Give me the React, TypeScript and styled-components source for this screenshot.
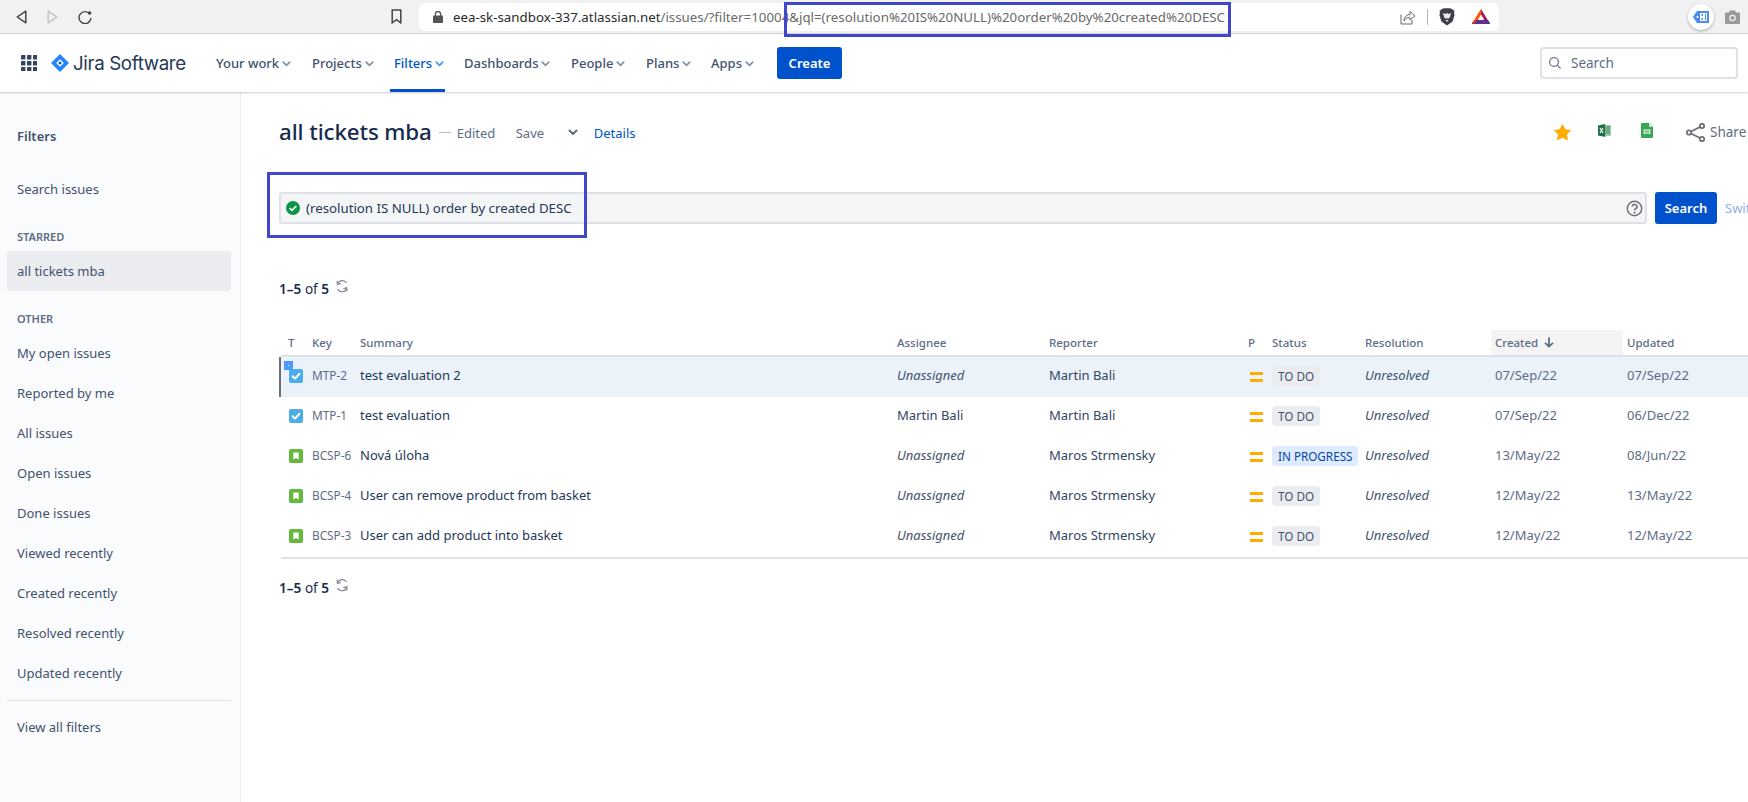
import React from "react";
import styled, { createGlobalStyle } from "styled-components";

const Global = createGlobalStyle`
  html, body { margin: 0; padding: 0; background: #fff; overflow: hidden; }
  body { font-family: "Noto Sans", "Liberation Sans", sans-serif; color: #172b4d; }
  * { box-sizing: border-box; }
`;

const Page = styled.div`
  position: relative;
  width: 1748px;
  height: 802px;
  overflow: hidden;
  display: flex;
  flex-direction: column;
`;

const Annotation = styled.div<{ $l: number; $t: number; $w: number; $h: number }>`
  position: absolute;
  left: ${p => p.$l}px;
  top: ${p => p.$t}px;
  width: ${p => p.$w}px;
  height: ${p => p.$h}px;
  border: 3px solid #3f48cc;
  pointer-events: none;
  z-index: 5;
`;

/* Browser chrome */
const Chrome = styled.div`
  height: 34px;
  flex: none;
  background: #f1f1f1;
  border-bottom: 1px solid #d6d6d6;
  display: flex;
  align-items: center;
  padding-left: 16px;
`;
const ChromeBtn = styled.svg`
  display: block;
  flex: none;
`;
const ChromeNavs = styled.div`
  display: flex;
  align-items: center;
  gap: 20px;
  width: 375px;
  flex: none;
`;
const UrlPill = styled.div`
  margin-left: 17px;
  width: 1080px;
  height: 28px;
  flex: none;
  background: #fff;
  border-radius: 6px;
  display: flex;
  align-items: center;
  padding: 0 9px 0 14px;
`;
const UrlText = styled.div`
  font-size: 13.3px;
  white-space: nowrap;
  color: #6a6a6a;
  flex: 1;
  margin-left: 10px;
`;
const UrlHost = styled.span`
  color: #2b2b2b;
`;
const PillIcons = styled.div`
  display: flex;
  align-items: center;
  gap: 11px;
`;
const PillSep = styled.div`
  width: 1px;
  height: 16px;
  background: #b5b5b5;
`;
const BatIcon = styled.svg`
  margin-left: 6px;
  flex: none;
`;
const ExtIcons = styled.div`
  margin-left: auto;
  display: flex;
  align-items: center;
  gap: 11px;
  padding-right: 8px;
`;
const ExtCircle = styled.div`
  width: 26px;
  height: 26px;
  border-radius: 50%;
  background: #fff;
  box-shadow: 0 1px 3px rgba(0, 0, 0, 0.3);
  display: flex;
  align-items: center;
  justify-content: center;
`;

/* Jira nav */
const TopNav = styled.header`
  height: 58px;
  flex: none;
  background: #fff;
  display: flex;
  align-items: center;
  padding-left: 21px;
  box-shadow: 0 1px 2px rgba(9, 30, 66, 0.22);
  position: relative;
  z-index: 2;
`;
const Logo = styled.div`
  display: flex;
  align-items: center;
  margin-left: 14px;
  gap: 4px;
  width: 161px;
`;
const LogoText = styled.span`
  font-family: "Inter", sans-serif;
  font-size: 18.7px;
  font-weight: 400;
  color: #253858;
  letter-spacing: -0.35px;
  white-space: nowrap;
`;
const NavItem = styled.div<{ $active?: boolean; $w: number }>`
  width: ${p => p.$w}px;
  height: 57px;
  display: flex;
  align-items: center;
  gap: 2px;
  padding-left: 4px;
  font-size: 13px;
  font-weight: 500;
  white-space: nowrap;
  color: ${p => (p.$active ? "#0052cc" : "#42526e")};
  position: relative;
  &::after {
    content: "";
    display: ${p => (p.$active ? "block" : "none")};
    position: absolute;
    left: 0;
    bottom: 0;
    width: 55px;
    height: 3px;
    background: #0052cc;
  }
`;
const NavList = styled.nav`
  display: flex;
  align-items: center;
`;
const CreateBtn = styled.button`
  width: 65px;
  height: 32px;
  border: 0;
  border-radius: 3px;
  background: #0052cc;
  color: #fff;
  font: 600 13px "Noto Sans", sans-serif;
`;
const TopSearch = styled.div`
  margin-left: auto;
  margin-right: 10px;
  width: 198px;
  height: 32px;
  border: 2px solid #dfe1e6;
  border-radius: 4px;
  display: flex;
  align-items: center;
  padding-left: 6px;
  gap: 9px;
  font-size: 13.5px;
  color: #5e6c84;
`;

/* Body */
const Body = styled.div`
  flex: 1;
  display: flex;
  min-height: 0;
`;
const Sidebar = styled.aside`
  width: 241px;
  flex: none;
  background: #fafbfc;
  border-right: 1px solid #ebecf0;
  padding: 24px 9px 0 7px;
`;
const SideTitle = styled.div`
  height: 40px;
  padding-left: 10px;
  display: flex;
  align-items: center;
  font-size: 13px;
  font-weight: 600;
  color: #42526e;
  margin-bottom: 13px;
`;
const SideItem = styled.div<{ $selected?: boolean }>`
  height: 40px;
  padding-left: 10px;
  display: flex;
  align-items: center;
  font-size: 13px;
  color: #42526e;
  border-radius: 3px;
  background: ${p => (p.$selected ? "#ebecf0" : "transparent")};
`;
const SideLabel = styled.div`
  height: 20px;
  margin: 17px 0 5px;
  padding-left: 10px;
  display: flex;
  align-items: center;
  font-size: 11px;
  font-weight: 600;
  color: #5e6c84;
`;
const SideRule = styled.hr`
  border: 0;
  height: 1px;
  background: #dfe1e6;
  margin: 7px 0 6px;
`;

const Main = styled.main`
  flex: 1;
  min-width: 0;
  padding: 20px 0 0 38px;
  overflow: hidden;
`;
const TitleRow = styled.div`
  height: 40px;
  display: flex;
  align-items: center;
`;
const Title = styled.h1`
  margin: 0 0 2px;
  font-size: 22.3px;
  font-weight: 500;
  color: #172b4d;
  white-space: nowrap;
  letter-spacing: -0.1px;
`;
const Dash = styled.span`
  width: 12px;
  height: 1px;
  background: #b3bac5;
  margin: 0 6px 0 7px;
`;
const Meta = styled.span<{ $link?: boolean; $w?: number }>`
  font-size: 13px;
  margin-top: 1px;
  color: ${p => (p.$link ? "#0052cc" : "#5e6c84")};
  ${p => (p.$w ? `width: ${p.$w}px;` : "")}
`;
const SaveChevron = styled.span`
  width: 27px;
  display: flex;
`;
const Actions = styled.div`
  margin-left: auto;
  display: flex;
  align-items: center;
  color: #5e6c84;
  font-size: 13.5px;
`;
const ActionIcon = styled.span<{ $w: number; $lift?: number }>`
  width: ${p => p.$w}px;
  display: flex;
  margin-top: ${p => p.$lift ?? 0}px;
`;
const ShareLabel = styled.span`
  width: 38px;
`;
const SearchRow = styled.div`
  margin-top: 40px;
  display: flex;
  align-items: center;
  height: 32px;
`;
const JqlBar = styled.div`
  width: 1368px;
  height: 32px;
  flex: none;
  background: #f4f5f7;
  border: 2px solid #dfe1e6;
  border-radius: 3px;
  display: flex;
  align-items: center;
  padding: 0 2px 0 5px;
  gap: 6px;
  font-size: 13.25px;
  color: #253858;
`;
const JqlText = styled.span`
  flex: 1;
  white-space: nowrap;
`;
const SearchBtn = styled.button`
  margin-left: 8px;
  width: 62px;
  height: 32px;
  flex: none;
  border: 0;
  border-radius: 3px;
  background: #0052cc;
  color: #fff;
  font: 600 13px "Noto Sans", sans-serif;
`;
const SwitchLink = styled.span`
  margin-left: 8px;
  font-size: 13px;
  color: #8fb0e8;
  white-space: nowrap;
`;
const Pager = styled.div<{ $top: number }>`
  margin-top: ${p => p.$top}px;
  height: 20px;
  display: flex;
  align-items: center;
  font-size: 13.6px;
  color: #172b4d;
  gap: 6px;
`;
const PagerLabel = styled.span`
  white-space: nowrap;
  b {
    font-weight: 600;
  }
`;
const PagerIcon = styled.span`
  display: flex;
  margin-top: -4px;
`;
const Table = styled.div`
  margin: 32px 0 0 2px;
  border-bottom: 2px solid #dfe1e6;
`;
const columns = "24px 48px 537px 152px 199px 24px 93px 130px 132px 1fr";
const HeadRow = styled.div`
  display: grid;
  grid-template-columns: ${columns};
  padding-left: 3px;
  height: 27px;
  border-bottom: 2px solid #dfe1e6;
`;
const HeadCell = styled.div<{ $sorted?: boolean }>`
  padding-left: 4px;
  height: 25px;
  display: flex;
  align-items: center;
  gap: 6px;
  font-size: 11.5px;
  font-weight: 500;
  color: #5e6c84;
  white-space: nowrap;
  background: ${p => (p.$sorted ? "#f4f4f4" : "transparent")};
`;
const Row = styled.div<{ $focused?: boolean }>`
  display: grid;
  grid-template-columns: ${columns};
  padding-left: 3px;
  height: 40px;
  align-items: center;
  position: relative;
  background: ${p => (p.$focused ? "#ebf2f9" : "#fff")};
  box-shadow: ${p => (p.$focused ? "-2px 0 0 #6b6e76" : "none")};
`;
const Cell = styled.div<{ $tone?: "key" | "date" | "person"; $italic?: boolean }>`
  padding-left: 4px;
  margin-top: -4px;
  font-size: 13px;
  white-space: nowrap;
  font-style: ${p => (p.$italic ? "italic" : "normal")};
  color: ${p =>
    p.$tone === "key" || p.$tone === "date" ? "#5e6c84" : p.$italic ? "#42526e" : p.$tone === "person" ? "#344563" : "#253858"};
`;
const KeyCell = styled(Cell)`
  font-size: 11.8px;
`;
const StatusCell = styled.div`
  padding-left: 4px;
  margin-top: -2px;
  display: flex;
`;
const IconCell = styled.div`
  padding-left: 5px;
  display: flex;
  margin-top: -2px;
`;
const FocusMark = styled.span`
  position: absolute;
  left: 3px;
  top: 4px;
  width: 9px;
  height: 9px;
  background: #4c9aff;
  z-index: 1;
  &::after {
    content: "";
    position: absolute;
    left: 4px;
    top: 4px;
    width: 1px;
    height: 1px;
    background: #fff;
  }
`;
const PriorityIcon = styled.div`
  padding-left: 6px;
  display: flex;
  flex-direction: column;
  gap: 4px;
  margin-top: -1px;
  &::before,
  &::after {
    content: "";
    width: 13px;
    height: 3px;
    background: #ffab00;
  }
`;
const Chip = styled.span<{ $blue?: boolean }>`
  display: inline-flex;
  align-items: center;
  height: 20px;
  padding: 0 6px;
  border-radius: 3px;
  font-size: 11.7px;
  font-weight: 400;
  white-space: nowrap;
  background: ${p => (p.$blue ? "#deebff" : "#ebecf0")};
  color: ${p => (p.$blue ? "#0747a6" : "#42526e")};
`;

const TaskIcon = () => (
  <svg width="14" height="14" viewBox="0 0 14 14">
    <rect width="14" height="14" rx="2" fill="#4bade8" />
    <path d="M3.6 7.3 L6 9.6 L10.4 4.8" fill="none" stroke="#fff" strokeWidth="2" strokeLinecap="round" strokeLinejoin="round" />
  </svg>
);
const StoryIcon = () => (
  <svg width="14" height="14" viewBox="0 0 14 14">
    <rect width="14" height="14" rx="2" fill="#63ba3c" />
    <path d="M4.3 3.4 H9.7 V10.8 L7 8.8 L4.3 10.8 Z" fill="#fff" />
  </svg>
);
const Chevron = ({ color = "#8993a4", size = 11 }: { color?: string; size?: number }) => (
  <svg width={size} height={size} viewBox="0 0 12 12">
    <path d="M2.5 4.5 L6 8 L9.5 4.5" fill="none" stroke={color} strokeWidth="2" strokeLinecap="round" strokeLinejoin="round" />
  </svg>
);
const RefreshIcon = () => (
  <svg width="14" height="14" viewBox="0 0 14 14" fill="none" stroke="#7a8494" strokeWidth="1.1">
    <path d="M11.5 4 A5 5 0 0 0 2.5 5" />
    <path d="M2.2 1.8 L2.4 5.4 L5.8 4.6" />
    <path d="M2.5 10 A5 5 0 0 0 11.8 9" />
    <path d="M12 12.4 L11.8 8.8 L8.4 9.6" />
  </svg>
);

type Issue = {
  type: "task" | "story";
  key: string;
  summary: string;
  assignee: string;
  unassigned: boolean;
  reporter: string;
  status: string;
  created: string;
  updated: string;
};
const issues: Issue[] = [
  { type: "task", key: "MTP-2", summary: "test evaluation 2", assignee: "Unassigned", unassigned: true, reporter: "Martin Bali", status: "TO DO", created: "07/Sep/22", updated: "07/Sep/22" },
  { type: "task", key: "MTP-1", summary: "test evaluation", assignee: "Martin Bali", unassigned: false, reporter: "Martin Bali", status: "TO DO", created: "07/Sep/22", updated: "06/Dec/22" },
  { type: "story", key: "BCSP-6", summary: "Nová úloha", assignee: "Unassigned", unassigned: true, reporter: "Maros Strmensky", status: "IN PROGRESS", created: "13/May/22", updated: "08/Jun/22" },
  { type: "story", key: "BCSP-4", summary: "User can remove product from basket", assignee: "Unassigned", unassigned: true, reporter: "Maros Strmensky", status: "TO DO", created: "12/May/22", updated: "13/May/22" },
  { type: "story", key: "BCSP-3", summary: "User can add product into basket", assignee: "Unassigned", unassigned: true, reporter: "Maros Strmensky", status: "TO DO", created: "12/May/22", updated: "12/May/22" },
];
const navItems: [string, number, boolean?][] = [
  ["Your work", 96],
  ["Projects", 82],
  ["Filters", 70, true],
  ["Dashboards", 107],
  ["People", 75],
  ["Plans", 65],
  ["Apps", 70],
];
const sideOther = ["My open issues", "Reported by me", "All issues", "Open issues", "Done issues", "Viewed recently", "Created recently", "Resolved recently", "Updated recently"];

export default function App() {
  return (
    <Page>
      <Global />
      <Annotation $l={784} $t={2} $w={447} $h={35} />
      <Annotation $l={267} $t={172} $w={320} $h={66} />
      <Chrome>
        <ChromeNavs>
          <ChromeBtn width="11" height="14" viewBox="0 0 11 14">
            <path d="M9.8 1.2 V12.8 L1.2 7 Z" fill="none" stroke="#444" strokeWidth="1.5" strokeLinejoin="round" />
          </ChromeBtn>
          <ChromeBtn width="11" height="14" viewBox="0 0 11 14">
            <path d="M1.2 1.2 V12.8 L9.8 7 Z" fill="none" stroke="#c4c4c4" strokeWidth="1.5" strokeLinejoin="round" />
          </ChromeBtn>
          <ChromeBtn width="14" height="14" viewBox="0 0 14 14">
            <path d="M11.8 4 A6 6 0 1 0 13 8" fill="none" stroke="#444" strokeWidth="1.4" />
            <circle cx="11.6" cy="3" r="1.8" fill="#444" />
          </ChromeBtn>
        </ChromeNavs>
        <ChromeBtn width="11" height="15" viewBox="0 0 11 15">
          <path d="M1.2 1 H9.8 V13.8 L5.5 10.6 L1.2 13.8 Z" fill="none" stroke="#444" strokeWidth="1.5" />
        </ChromeBtn>
        <UrlPill>
          <ChromeBtn width="10" height="12" viewBox="0 0 10 12">
            <rect y="4.5" width="10" height="7.5" rx="1" fill="#555" />
            <path d="M2.4 5 V3.2 A2.6 2.6 0 0 1 7.6 3.2 V5" fill="none" stroke="#555" strokeWidth="1.3" />
          </ChromeBtn>
          <UrlText>
            <UrlHost>eea-sk-sandbox-337.atlassian.net</UrlHost>/issues/?filter=10004&amp;jql=(resolution%20IS%20NULL)%20order%20by%20created%20DESC
          </UrlText>
          <PillIcons>
            <ChromeBtn width="16" height="16" viewBox="0 0 16 16" fill="none" stroke="#666" strokeWidth="1">
              <path d="M1 5.5 V15 H12 V11" />
              <path d="M4 12 C4 7.5 7.5 5.5 10 5.5 V2.5 L15 7 L10 11 V8.5 C7.5 8.5 5.5 9.5 4 12 Z" />
            </ChromeBtn>
            <PillSep />
            <ChromeBtn width="16" height="18" viewBox="0 0 16 18">
              <path d="M3 1 L5 0.2 H11 L13 1 L15.5 3 L15 5 L15.6 7 L13.6 13.6 L8 17.6 L2.4 13.6 L0.4 7 L1 5 L0.5 3 Z" fill="#3f3f4a" />
              <path d="M4 5 L6.6 6 L8 5 L9.4 6 L12 5 L11 9 L9.4 10.8 L8 10.2 L6.6 10.8 L5 9 Z" fill="#e8e8ec" />
              <path d="M6.5 12 H9.5 L8 14 Z" fill="#e8e8ec" />
            </ChromeBtn>
            <BatIcon width="18" height="16" viewBox="0 0 18 16">
              <path d="M9 0 L0 14.5 H4 L9 6 Z" fill="#ff5000" />
              <path d="M9 0 L18 14.5 H14 L9 6 Z" fill="#9e1f63" />
              <path d="M0 14.2 L2 11 H16 L18 14.2 L17.6 15 H0.4 Z" fill="#662d91" />
              <path d="M6 10.8 L9 5.6 L12 10.8 Z" fill="#fff" />
              <path d="M0 14.2 L2 11 H4 L2.4 14.2 Z" fill="#ff5000" />
            </BatIcon>
          </PillIcons>
        </UrlPill>
        <ExtIcons>
          <ExtCircle>
            <svg width="18" height="14" viewBox="0 0 18 14">
              <path d="M5 1 H17 V13 H5 L1 7 Z" fill="#4c8bf5" />
              <rect x="8" y="3" width="7" height="8" fill="#fff" />
              <rect x="9.5" y="4" width="1.5" height="2" fill="#4c8bf5" />
              <rect x="9.5" y="8" width="1.5" height="2" fill="#4c8bf5" />
              <rect x="13" y="4" width="1" height="6" fill="#4c8bf5" />
              <circle cx="5.5" cy="7" r="1.1" fill="#fff" />
            </svg>
          </ExtCircle>
          <svg width="15" height="14" viewBox="0 0 15 14">
            <path d="M1 2.5 H4 L5 0.5 H10 L11 2.5 H14 Q15 2.5 15 3.5 V13 Q15 14 14 14 H1 Q0 14 0 13 V3.5 Q0 2.5 1 2.5 Z" fill="#9a9a9a" />
            <circle cx="7.5" cy="8" r="3.3" fill="#f1f1f1" />
            <circle cx="7.5" cy="8" r="2" fill="#9a9a9a" />
          </svg>
        </ExtIcons>
      </Chrome>
      <TopNav>
        <ChromeBtn width="16" height="16" viewBox="0 0 16 16" fill="#344563">
          {[0, 6, 12].flatMap(y =>
            [0, 6, 12].map(x => <rect key={`${x}-${y}`} x={x} y={y} width="4.4" height="4.4" rx="0.6" />)
          )}
        </ChromeBtn>
        <Logo>
          <ChromeBtn width="18" height="18" viewBox="0 0 18 18">
            <path d="M9 0 L18 9 L9 18 L0 9 Z" fill="#2684ff" />
            <path d="M9 5.2 L12.8 9 L9 12.8 L5.2 9 Z" fill="#fff" />
            <path d="M9 7.2 L10.8 9 L9 10.8 L7.2 9 Z" fill="#0052cc" />
          </ChromeBtn>
          <LogoText>Jira Software</LogoText>
        </Logo>
        <NavList>
          {navItems.map(([label, w, active]) => (
            <NavItem key={label} $w={w} $active={active}>
              {label}
              <Chevron color={active ? "#4c9aff" : "#8993a4"} />
            </NavItem>
          ))}
        </NavList>
        <CreateBtn>Create</CreateBtn>
        <TopSearch>
          <svg width="14" height="14" viewBox="0 0 14 14" fill="none" stroke="#6b778c" strokeWidth="1.3">
            <circle cx="6" cy="6" r="4.4" />
            <path d="M9.3 9.3 L12.6 12.6" />
          </svg>
          Search
        </TopSearch>
      </TopNav>
      <Body>
        <Sidebar>
          <SideTitle>Filters</SideTitle>
          <SideItem>Search issues</SideItem>
          <SideLabel>STARRED</SideLabel>
          <SideItem $selected>all tickets mba</SideItem>
          <SideLabel>OTHER</SideLabel>
          {sideOther.map(s => (
            <SideItem key={s}>{s}</SideItem>
          ))}
          <SideRule />
          <SideItem>View all filters</SideItem>
        </Sidebar>
        <Main>
          <TitleRow>
            <Title>all tickets mba</Title>
            <Dash />
            <Meta $w={59}>Edited</Meta>
            <Meta $w={51}>Save</Meta>
            <SaveChevron>
              <Chevron color="#5e6c84" size={12} />
            </SaveChevron>
            <Meta $link>Details</Meta>
            <Actions>
              <ActionIcon $w={44}>
                <svg width="17" height="17" viewBox="0 0 17 17">
                  <path d="M8.5 0.8 L11 5.7 L16.4 6.5 L12.5 10.3 L13.4 15.8 L8.5 13.2 L3.6 15.8 L4.5 10.3 L0.6 6.5 L6 5.7 Z" fill="#ffab00" stroke="#ffab00" strokeLinejoin="round" />
                </svg>
              </ActionIcon>
              <ActionIcon $w={43} $lift={-4}>
                <svg width="13" height="13" viewBox="0 0 13 13">
                  <rect x="5" y="1" width="8" height="11" fill="#9ccfa8" />
                  <path d="M0 1.6 L7.2 0 V13 L0 11.4 Z" fill="#1e7145" />
                  <path d="M2 4 L5 9 M5 4 L2 9" stroke="#fff" strokeWidth="1.1" />
                  <path d="M8 3 H12 M8 5 H12 M8 7 H12 M8 9 H12" stroke="#1e7145" strokeWidth="0.8" />
                </svg>
              </ActionIcon>
              <ActionIcon $w={45} $lift={-4}>
                <svg width="12" height="15" viewBox="0 0 12 15">
                  <path d="M1 0 H8 L12 4 V14 Q12 15 11 15 H1 Q0 15 0 14 V1 Q0 0 1 0 Z" fill="#3aa757" />
                  <path d="M8 0 L12 4 H8 Z" fill="#c5e4cd" />
                  <rect x="2.7" y="6.5" width="6.6" height="4.5" fill="#fff" />
                  <path d="M5 6.5 V11 M7 6.5 V11" stroke="#3aa757" strokeWidth="0.9" />
                  <path d="M2.7 8.7 H9.3" stroke="#3aa757" strokeWidth="0.7" />
                </svg>
              </ActionIcon>
              <ActionIcon $w={24}>
                <svg width="19" height="19" viewBox="0 0 19 19" fill="none" stroke="#6b6e76" strokeWidth="1.8">
                  <circle cx="3" cy="9.5" r="2.2" />
                  <circle cx="16" cy="3" r="2.2" />
                  <circle cx="16" cy="16" r="2.2" />
                  <path d="M5 8.5 L14 4 M5 10.5 L14 15" />
                </svg>
              </ActionIcon>
              <ShareLabel>Share</ShareLabel>
            </Actions>
          </TitleRow>
          <SearchRow>
            <JqlBar>
              <ChromeBtn width="14" height="14" viewBox="0 0 14 14">
                <circle cx="7" cy="7" r="7" fill="#0e9445" />
                <path d="M3.7 7.2 L6 9.4 L10.3 5" fill="none" stroke="#fff" strokeWidth="1.7" />
              </ChromeBtn>
              <JqlText>(resolution IS NULL) order by created DESC</JqlText>
              <ChromeBtn width="17" height="17" viewBox="0 0 17 17">
                <circle cx="8.5" cy="8.5" r="7.2" fill="none" stroke="#6b6e76" strokeWidth="1.4" />
                <path d="M6.2 6.6 A2.4 2.2 0 1 1 9.6 8.6 Q8.5 9.2 8.5 10.4" fill="none" stroke="#6b6e76" strokeWidth="1.5" />
                <circle cx="8.5" cy="12.7" r="0.95" fill="#6b6e76" />
              </ChromeBtn>
            </JqlBar>
            <SearchBtn>Search</SearchBtn>
            <SwitchLink>Switch to basic</SwitchLink>
          </SearchRow>
          <Pager $top={54}>
            <PagerLabel>
              <b>1–5</b> of <b>5</b>
            </PagerLabel>
            <PagerIcon>
              <RefreshIcon />
            </PagerIcon>
          </Pager>
          <Table>
            <HeadRow>
              <HeadCell>T</HeadCell>
              <HeadCell>Key</HeadCell>
              <HeadCell>Summary</HeadCell>
              <HeadCell>Assignee</HeadCell>
              <HeadCell>Reporter</HeadCell>
              <HeadCell>P</HeadCell>
              <HeadCell>Status</HeadCell>
              <HeadCell>Resolution</HeadCell>
              <HeadCell $sorted>
                Created
                <svg width="10" height="11" viewBox="0 0 10 11" fill="none" stroke="#5e6c84" strokeWidth="1.8">
                  <path d="M5 0.5 V9.5 M1 5.8 L5 9.6 L9 5.8" />
                </svg>
              </HeadCell>
              <HeadCell>Updated</HeadCell>
            </HeadRow>
            {issues.map((it, i) => (
              <Row key={it.key} $focused={i === 0}>
                {i === 0 && <FocusMark />}
                <IconCell>{it.type === "task" ? <TaskIcon /> : <StoryIcon />}</IconCell>
                <KeyCell $tone="key">{it.key}</KeyCell>
                <Cell>{it.summary}</Cell>
                <Cell $italic={it.unassigned} $tone="person">{it.assignee}</Cell>
                <Cell $tone="person">{it.reporter}</Cell>
                <PriorityIcon />
                <StatusCell>
                  <Chip $blue={it.status !== "TO DO"}>{it.status}</Chip>
                </StatusCell>
                <Cell $italic>Unresolved</Cell>
                <Cell $tone="date">{it.created}</Cell>
                <Cell $tone="date">{it.updated}</Cell>
              </Row>
            ))}
          </Table>
          <Pager $top={18}>
            <PagerLabel>
              <b>1–5</b> of <b>5</b>
            </PagerLabel>
            <PagerIcon>
              <RefreshIcon />
            </PagerIcon>
          </Pager>
        </Main>
      </Body>
    </Page>
  );
}
